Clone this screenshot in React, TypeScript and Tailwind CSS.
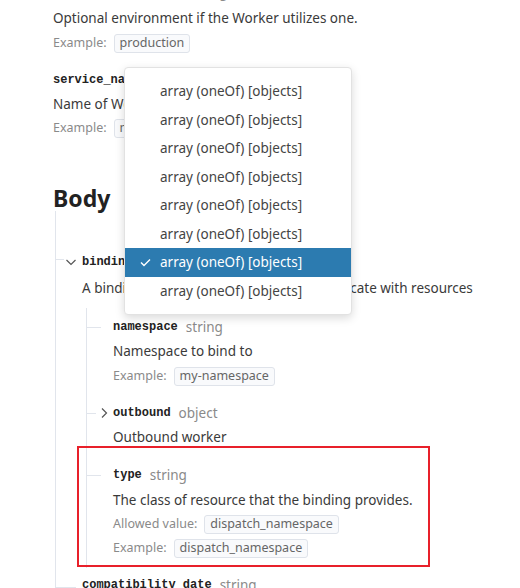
import React from "react";

const SANS = "font-['Segoe_UI','Noto_Sans','Open_Sans',sans-serif]";
const MONO = "font-['Liberation_Mono','DejaVu_Sans_Mono',monospace]";

const ITEMS = [0, 1, 2, 3, 4, 5, 6, 7];
const SELECTED = 6;

function Badge({ children }: { children: React.ReactNode }) {
  return (
    <span className="inline-flex h-[19px] items-center rounded-[3px] border border-[#dfe3ea] bg-[#f9fafc] px-[5px] text-[12.5px] text-[#666]">
      {children}
    </span>
  );
}

function Meta({ label, value }: { label: string; value: string }) {
  return (
    <div className="flex h-6 items-center gap-[7px] text-[12.5px] text-[#8a8a8a]">
      <span>{label}</span>
      <Badge>{value}</Badge>
    </div>
  );
}

function Name({ name, type }: { name: string; type: string }) {
  return (
    <div className="flex h-5 items-center gap-[8px]">
      <span className={`${MONO} text-[12px] font-bold text-[#222]`}>{name}</span>
      <span className="text-[13.5px] text-[#8a8a8a]">{type}</span>
    </div>
  );
}

function Chevron({ down }: { down?: boolean }) {
  return (
    <svg width="10" height="10" viewBox="0 0 10 10" className="text-[#555]">
      {down ? (
        <path d="M0.5 3 L5 7.5 L9.5 3" fill="none" stroke="currentColor" strokeWidth="1.2" />
      ) : (
        <path d="M3 0.5 L7.5 5 L3 9.5" fill="none" stroke="currentColor" strokeWidth="1.2" />
      )}
    </svg>
  );
}

export default function App() {
  return (
    <div className={`${SANS} relative h-[588px] w-[520px] overflow-hidden bg-white pl-[53px] text-[#3a3a3a]`}>
      {/* clipped label from previous param */}
      <div className="-mt-[18px]">
        <Name name="dispatch_namespace" type="string" />
      </div>
      <div className="mt-[4px] h-6 text-[13.5px] leading-6">Optional environment if the Worker utilizes one.</div>
      <div className="mt-px">
        <Meta label="Example:" value="production" />
      </div>

      <div className="mt-[15px]">
        <Name name="service_name" type="string" />
      </div>
      <div className="mt-[2px] h-6 text-[13.5px] leading-6">Name of Worker to bind to</div>
      <Meta label="Example:" value="my-worker" />

      <h2 className="mt-[42px] h-[29px] text-[23px] font-bold leading-8 text-[#222]">Body</h2>

      {/* tree */}
      <div className="ml-[2px] border-l border-[#e1e5ec] pt-[41px]">
        <div className="relative flex h-5 items-center pl-[10px]">
          <span className="absolute left-0 top-[7px] h-px w-[8px] bg-[#e1e5ec]" />
          <Chevron down />
          <div className="ml-[6px]">
            <Name name="bindings" type="array (oneOf) [objects]" />
          </div>
        </div>
        <div className="mt-[4px] h-6 whitespace-nowrap pl-[26px] text-[13.5px] leading-6">
          A binding to allow the Worker to communicate with resources
        </div>

        <div className="ml-[30px] mt-[8px] border-l border-[#e1e5ec] pb-[8px] pt-[9px]">
          <div className="relative pl-[26px]">
            <span className="absolute left-0 top-[10px] h-px w-[14px] bg-[#e1e5ec]" />
            <Name name="namespace" type="string" />
          </div>
          <div className="mt-[2px] h-6 pl-[26px] text-[13.5px] leading-6">Namespace to bind to</div>
          <div className="mt-px pl-[26px]">
            <Meta label="Example:" value="my-namespace" />
          </div>

          <div className="relative mt-[15px] flex h-5 items-center pl-[12px]">
            <span className="absolute left-0 top-[10px] h-px w-[9px] bg-[#e1e5ec]" />
            <Chevron />
            <div className="ml-[4px]">
              <Name name="outbound" type="object" />
            </div>
          </div>
          <div className="mt-[2px] h-6 pl-[26px] text-[13.5px] leading-6">Outbound worker</div>

          <div className="relative mt-[16px] pl-[26px]">
            <span className="absolute left-0 top-[10px] h-px w-[14px] bg-[#e1e5ec]" />
            <Name name="type" type="string" />
          </div>
          <div className="mt-[3px] h-6 pl-[26px] text-[13.5px] leading-6">The class of resource that the binding provides.</div>
          <div className="pl-[26px]">
            <Meta label="Allowed value:" value="dispatch_namespace" />
            <Meta label="Example:" value="dispatch_namespace" />
          </div>
        </div>

        <div className="relative mt-[7px] flex h-5 items-center pl-[26px]">
          <span className="absolute left-0 top-[12px] h-px w-[20px] bg-[#e1e5ec]" />
          <Name name="compatibility_date" type="string" />
        </div>
      </div>

      {/* annotation box */}
      <div className="pointer-events-none absolute left-[77px] top-[446px] h-[121px] w-[353px] border-2 border-[#e8202a]" />

      {/* open select menu */}
      <div className="absolute left-[124px] top-[67px] w-[228px] rounded-[4px] border border-[#e2e2e2] bg-white py-[9px] shadow-[0_3px_10px_rgba(0,0,0,0.15)]">
        {ITEMS.map((i) => (
          <div
            key={i}
            className={
              i === SELECTED
                ? "flex h-[28.5px] items-center bg-[#2c7bb0] text-[13.5px] text-white"
                : "flex h-[28.5px] items-center text-[13.5px] text-[#444]"
            }
          >
            <span className="flex w-[35px] justify-end pr-[9px]">
              {i === SELECTED && (
                <svg width="11" height="9" viewBox="0 0 11 9">
                  <path d="M1 4.5 L4 7.5 L10 1.5" fill="none" stroke="white" strokeWidth="1.4" />
                </svg>
              )}
            </span>
            <span>array (oneOf) [objects]</span>
          </div>
        ))}
      </div>
    </div>
  );
}
